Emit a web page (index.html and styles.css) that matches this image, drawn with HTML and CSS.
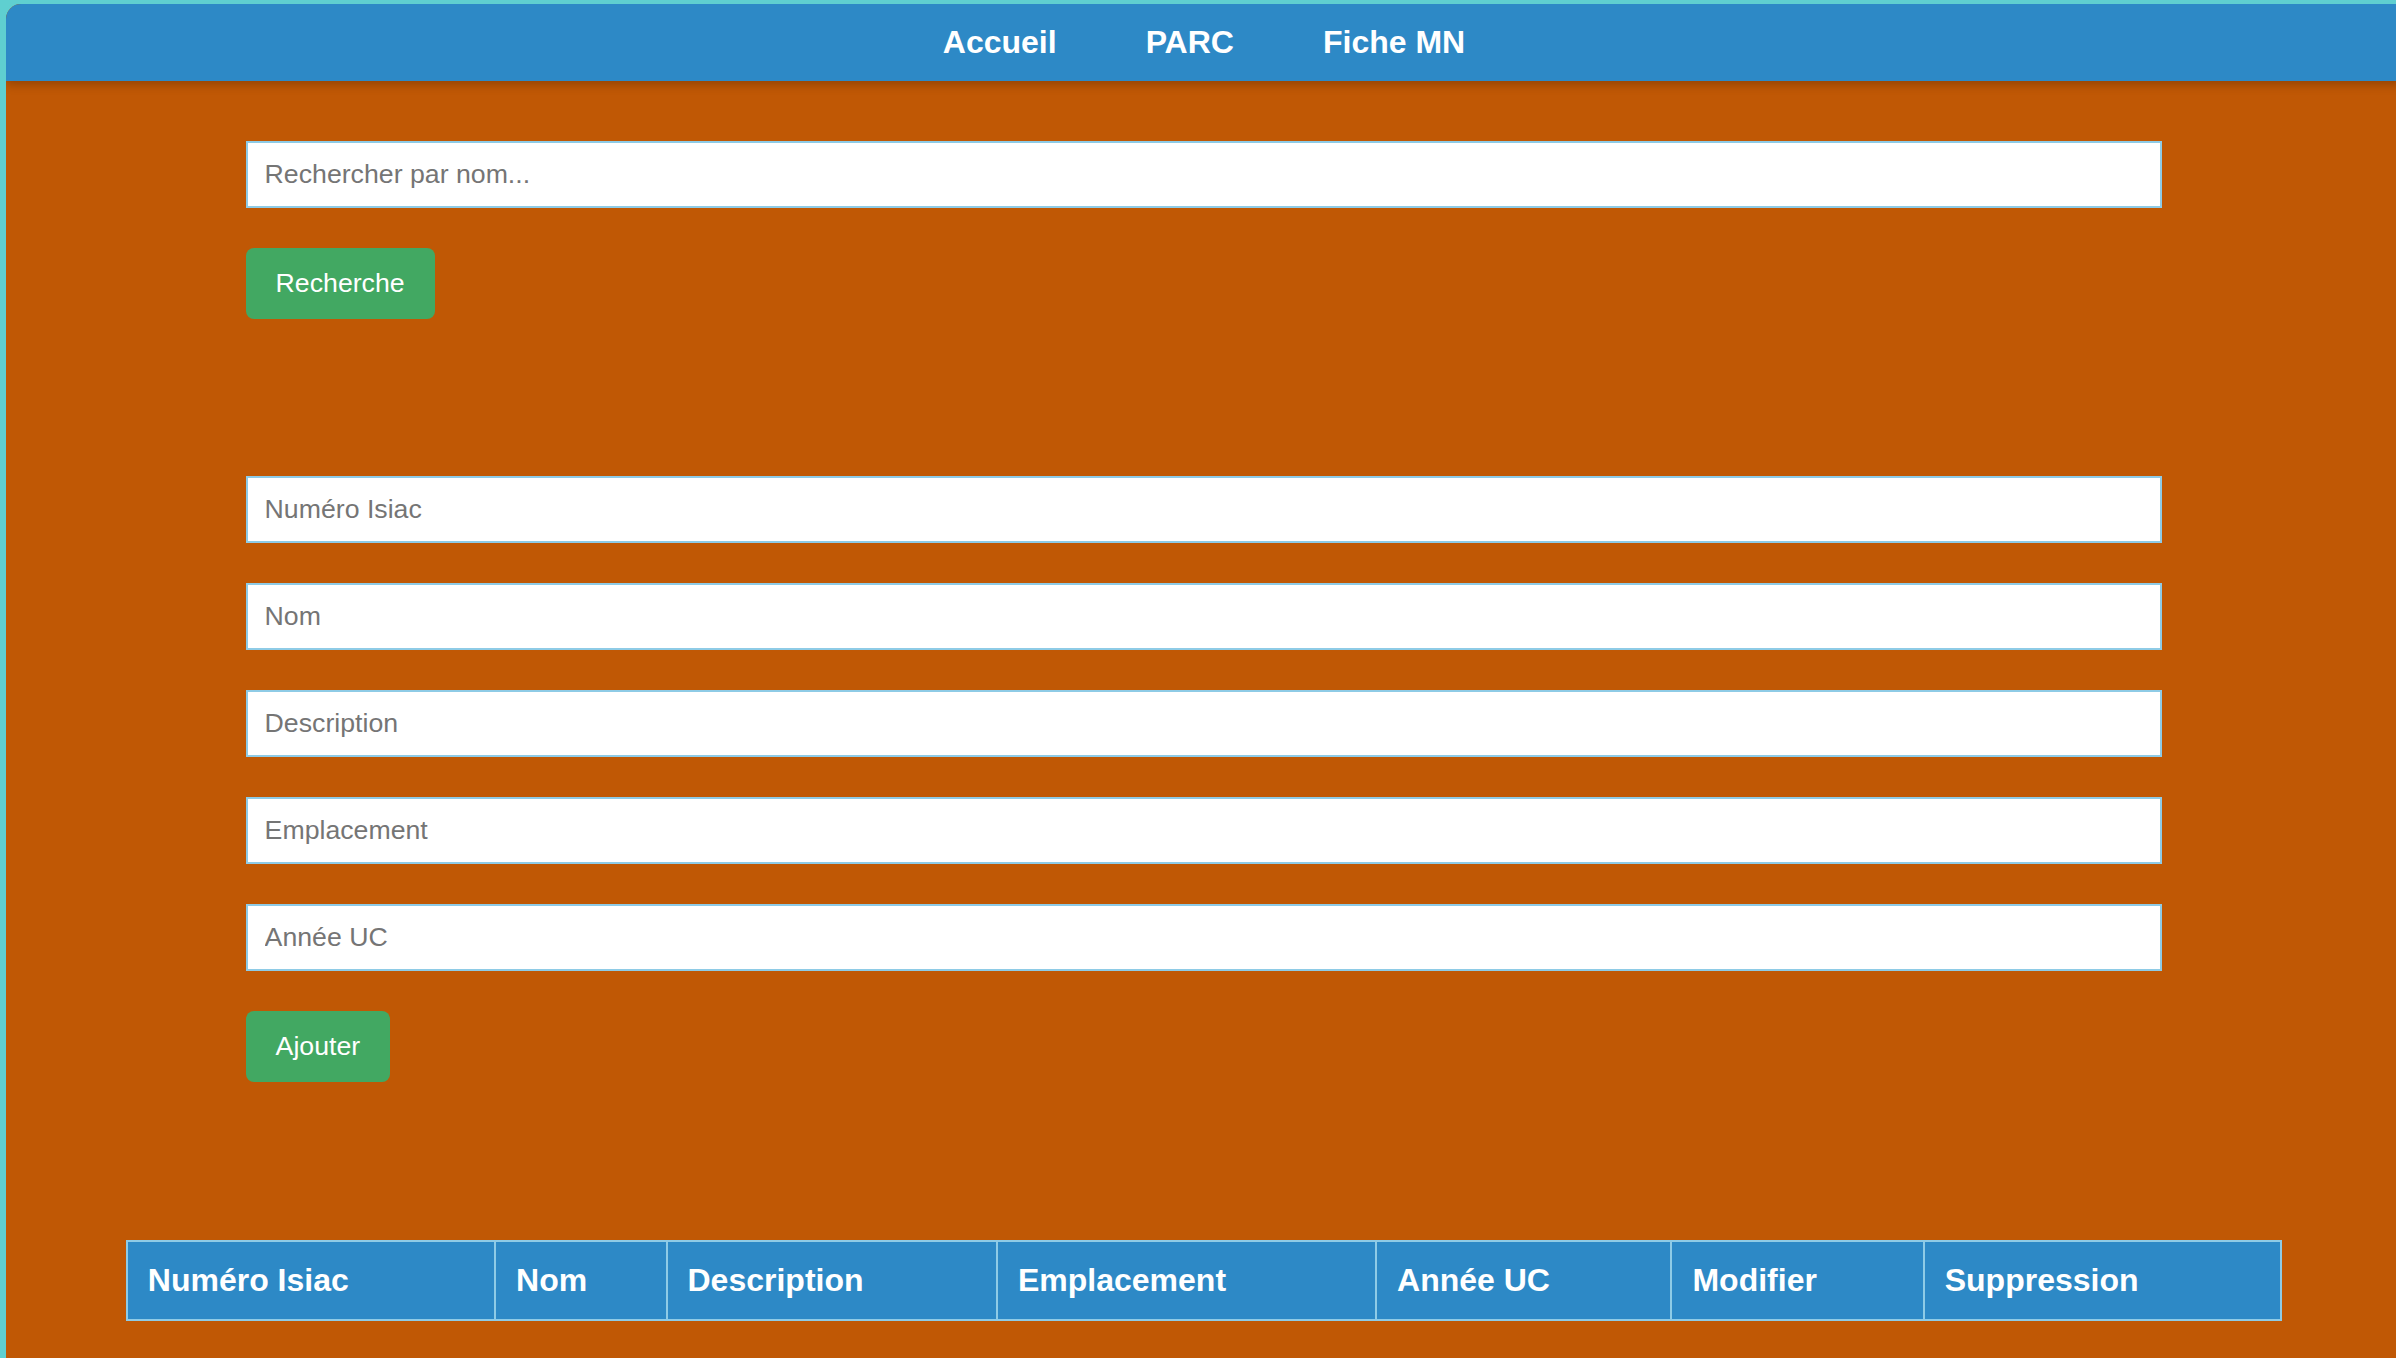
FILE: index.html
```html
<!DOCTYPE html>
<html lang="fr">
<head>
<meta charset="utf-8">
<title>PARC</title>
<link rel="stylesheet" href="styles.css">
</head>
<body>
<div class="page">
  <nav class="topnav">
    <a class="navlink" href="#">Accueil</a>
    <a class="navlink" href="#">PARC</a>
    <a class="navlink" href="#">Fiche MN</a>
  </nav>
  <main class="content">
    <section class="search">
      <input class="field" type="text" placeholder="Rechercher par nom...">
      <button class="btn" type="button">Recherche</button>
    </section>
    <section class="addform">
      <input class="field" type="text" placeholder="Numéro Isiac">
      <input class="field" type="text" placeholder="Nom">
      <input class="field" type="text" placeholder="Description">
      <input class="field" type="text" placeholder="Emplacement">
      <input class="field" type="text" placeholder="Année UC">
      <button class="btn" type="button">Ajouter</button>
    </section>
    <table class="grid">
      <thead>
        <tr>
          <th>Numéro Isiac</th>
          <th>Nom</th>
          <th>Description</th>
          <th>Emplacement</th>
          <th>Année UC</th>
          <th>Modifier</th>
          <th>Suppression</th>
        </tr>
      </thead>
      <tbody></tbody>
    </table>
  </main>
</div>
</body>
</html>
```
FILE: styles.css
```css
html {
  overflow: hidden;
}
body {
  margin: 0;
  padding: 4px 0 0 6px;
  background: #5fcfd0;
  font-family: "Liberation Sans", Arial, sans-serif;
}
.page {
  width: 100vw;
  background: #c05805;
  border-radius: 15px 0 0 0;
  min-height: 1400px;
  overflow: hidden;
}
.topnav {
  height: 77px;
  background: #2d89c6;
  display: flex;
  justify-content: center;
  align-items: center;
  gap: 89px;
  box-shadow: 0 4px 9px rgba(0, 0, 0, 0.22);
  position: relative;
}
.navlink {
  color: #ffffff;
  text-decoration: none;
  font-weight: bold;
  font-size: 32px;
}
.content {
  padding-top: 60px;
}
.search,
.addform {
  width: 80%;
  margin: 0 auto;
  display: flex;
  flex-direction: column;
  align-items: flex-start;
  gap: 40px;
}
.search {
  margin-bottom: 157px;
}
.addform {
  margin-bottom: 158px;
}
.field {
  box-sizing: border-box;
  width: 100%;
  height: 67px;
  margin: 0;
  padding: 0 17px;
  border: 2px solid #8ecbe6;
  background: #ffffff;
  font-family: "Liberation Sans", Arial, sans-serif;
  font-size: 26.7px;
  color: #333;
  outline: none;
}
.field::placeholder {
  color: #757575;
}
.btn {
  height: 71px;
  padding: 0 30px;
  border: none;
  border-radius: 8px;
  background: #42a862;
  color: #ffffff;
  font-family: "Liberation Sans", Arial, sans-serif;
  font-size: 26.7px;
  cursor: pointer;
}
.grid {
  width: 90%;
  margin: 0 auto;
  border-collapse: collapse;
  border: 2px solid #8ecbe6;
}
.grid th {
  background: #2d89c6;
  color: #ffffff;
  font-size: 32px;
  font-weight: bold;
  text-align: left;
  padding: 20px 20px;
  border: 2px solid #8ecbe6;
  white-space: nowrap;
}
```
